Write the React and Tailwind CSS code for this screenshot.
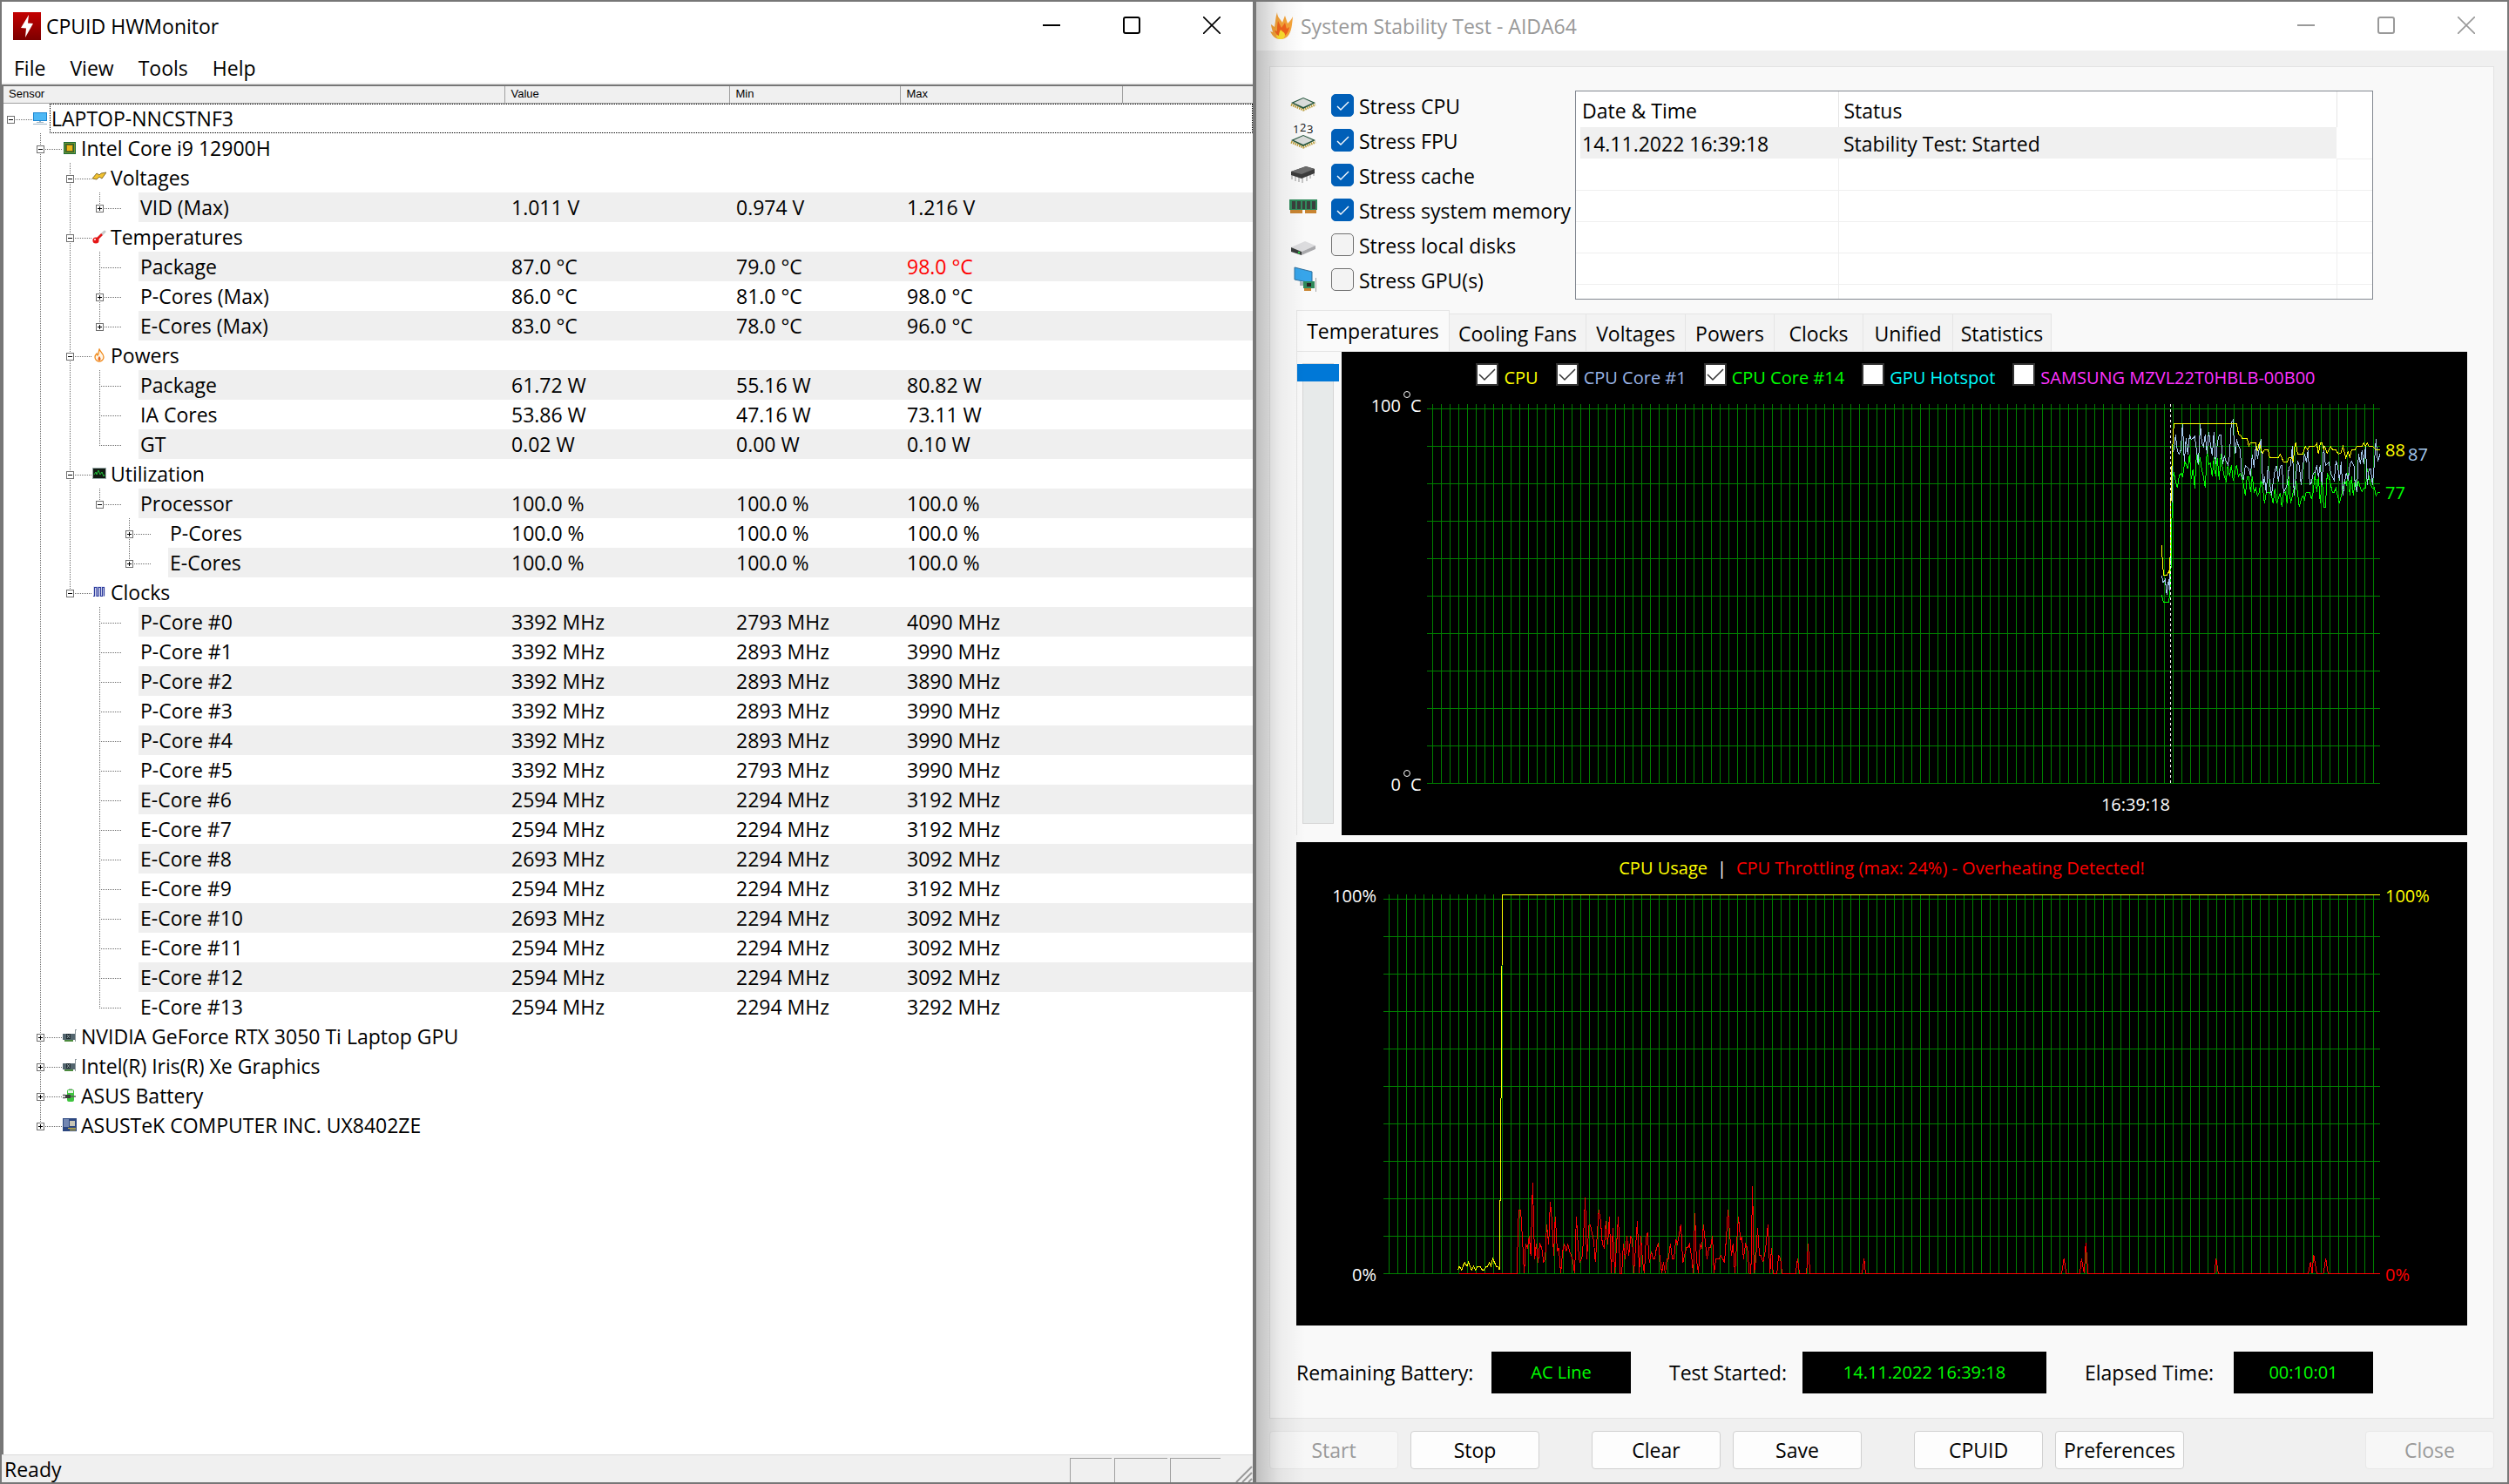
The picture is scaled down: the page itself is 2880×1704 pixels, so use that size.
import { useState } from "react";

const SENSORS = {
  label: "LAPTOP-NNCSTNF3",
  icon: "computer",
  open: true,
  children: [
    {
      label: "Intel Core i9 12900H",
      icon: "chip",
      open: true,
      children: [
        {
          label: "Voltages",
          icon: "voltage",
          open: true,
          children: [{ label: "VID (Max)", values: ["1.011 V", "0.974 V", "1.216 V"], open: false }],
        },
        {
          label: "Temperatures",
          icon: "thermometer",
          open: true,
          children: [
            { label: "Package", values: ["87.0 °C", "79.0 °C", "98.0 °C"], hot: true },
            { label: "P-Cores (Max)", values: ["86.0 °C", "81.0 °C", "98.0 °C"], open: false },
            { label: "E-Cores (Max)", values: ["83.0 °C", "78.0 °C", "96.0 °C"], open: false },
          ],
        },
        {
          label: "Powers",
          icon: "flame",
          open: true,
          children: [
            { label: "Package", values: ["61.72 W", "55.16 W", "80.82 W"] },
            { label: "IA Cores", values: ["53.86 W", "47.16 W", "73.11 W"] },
            { label: "GT", values: ["0.02 W", "0.00 W", "0.10 W"] },
          ],
        },
        {
          label: "Utilization",
          icon: "utilization",
          open: true,
          children: [
            {
              label: "Processor",
              values: ["100.0 %", "100.0 %", "100.0 %"],
              open: true,
              children: [
                { label: "P-Cores", values: ["100.0 %", "100.0 %", "100.0 %"], open: false },
                { label: "E-Cores", values: ["100.0 %", "100.0 %", "100.0 %"], open: false },
              ],
            },
          ],
        },
        {
          label: "Clocks",
          icon: "clock",
          open: true,
          children: [
            { label: "P-Core #0", values: ["3392 MHz", "2793 MHz", "4090 MHz"] },
            { label: "P-Core #1", values: ["3392 MHz", "2893 MHz", "3990 MHz"] },
            { label: "P-Core #2", values: ["3392 MHz", "2893 MHz", "3890 MHz"] },
            { label: "P-Core #3", values: ["3392 MHz", "2893 MHz", "3990 MHz"] },
            { label: "P-Core #4", values: ["3392 MHz", "2893 MHz", "3990 MHz"] },
            { label: "P-Core #5", values: ["3392 MHz", "2793 MHz", "3990 MHz"] },
            { label: "E-Core #6", values: ["2594 MHz", "2294 MHz", "3192 MHz"] },
            { label: "E-Core #7", values: ["2594 MHz", "2294 MHz", "3192 MHz"] },
            { label: "E-Core #8", values: ["2693 MHz", "2294 MHz", "3092 MHz"] },
            { label: "E-Core #9", values: ["2594 MHz", "2294 MHz", "3192 MHz"] },
            { label: "E-Core #10", values: ["2693 MHz", "2294 MHz", "3092 MHz"] },
            { label: "E-Core #11", values: ["2594 MHz", "2294 MHz", "3092 MHz"] },
            { label: "E-Core #12", values: ["2594 MHz", "2294 MHz", "3092 MHz"] },
            { label: "E-Core #13", values: ["2594 MHz", "2294 MHz", "3292 MHz"] },
          ],
        },
      ],
    },
    { label: "NVIDIA GeForce RTX 3050 Ti Laptop GPU", icon: "card", open: false },
    { label: "Intel(R) Iris(R) Xe Graphics", icon: "card", open: false },
    { label: "ASUS Battery", icon: "battery", open: false },
    { label: "ASUSTeK COMPUTER INC. UX8402ZE", icon: "board", open: false },
  ],
};

// Flattens the tree; rails[i] says whether the line of level i goes on below the row.
function flatten(node, depth = 0, rails = [], last = true) {
  const row = { ...node, depth, rails, last };
  const kids = node.children || [];
  return [row].concat(
    ...kids.map((kid, i) => flatten(kid, depth + 1, [...rails, !last], i === kids.length - 1))
  );
}

const ROWS = flatten(SENSORS);

function TreeIcon({ name }) {
  return (
    <svg width="16" height="16" viewBox="0 0 16 16" aria-hidden="true">
      {name === "computer" && (
        <>
          <rect x="0" y="1" width="16" height="10" fill="#1c86d1" />
          <rect x="1" y="2" width="14" height="8" fill="#4db8f5" />
          <path d="M7 11h2v2H7z" fill="#9db4c4" />
          <path d="M4 12.5h8M0 14.5h16" stroke="#9db4c4" />
        </>
      )}
      {name === "chip" && (
        <>
          <rect x="1" y="1" width="14" height="14" fill="#1c6b35" />
          <rect x="2.5" y="2.5" width="11" height="11" fill="none" stroke="#d9c22c" strokeDasharray="1 1" />
          <rect x="4" y="4" width="8" height="8" fill="#7d6512" />
          <rect x="5" y="5" width="6" height="6" fill="#e9b61c" />
        </>
      )}
      {name === "voltage" && (
        <path d="M0 9l5-6 3 2 2-2 6-1-5 7-3-2-3 3z" fill="#f2c230" stroke="#6b5210" strokeWidth="0.8" />
      )}
      {name === "thermometer" && (
        <>
          <path d="M14 2L6 10" stroke="#c9c9c9" strokeWidth="3" strokeLinecap="round" />
          <path d="M11 5l-6 6" stroke="#e51616" strokeWidth="2.5" />
          <circle cx="4" cy="12" r="3.6" fill="#e51616" />
          <circle cx="3" cy="11" r="1" fill="#fff" />
        </>
      )}
      {name === "flame" && (
        <>
          <path d="M8 1c1 3 5 5 5 9a5 5 0 0 1-10 0c0-2 1-3 2-4 0 1 1 2 1 2 2-2 1-5 2-7z" fill="#fff6e6" stroke="#f08a1c" strokeWidth="1.3" />
          <path d="M8 9c2 2 2 5 0 5s-2-3 0-5z" fill="#e8641a" />
        </>
      )}
      {name === "utilization" && (
        <>
          <rect x="0" y="1" width="16" height="13" fill="#99aaaa" />
          <rect x="1" y="2" width="14" height="11" fill="#101a12" />
          <path d="M2 9l2-3 1 3 2-5 2 5 2-3 2 5 1-2" fill="none" stroke="#1fbf3a" />
        </>
      )}
      {name === "clock" && (
        <>
          <rect x="1" y="1" width="13" height="12" fill="#e6e9f8" />
          <path d="M1 12.5h1.500V2.500h2.500v10h2V2.500h2.500v10h2V2.500h2v10" fill="none" stroke="#2b3a9c" strokeWidth="1.2" />
        </>
      )}
      {name === "card" && (
        <>
          <path d="M0 5h14v7H0z" fill="#54666f" />
          <path d="M4 5h5v6H4z" fill="#1e2a2f" />
          <path d="M5 6l3 4M8 6l-3 4" stroke="#aebcc2" strokeWidth="0.8" />
          <path d="M2 12h10v2H2z" fill="#4c8a3e" />
          <path d="M14.5 1v13M14 0.5h2" stroke="#8c979c" />
        </>
      )}
      {name === "battery" && (
        <>
          <rect x="7" y="0" width="4" height="2" fill="#b8b8b8" />
          <rect x="5" y="1" width="8" height="14" rx="2" fill="#3ec43e" />
          <rect x="6" y="2" width="6" height="3" fill="#e6efe6" />
          <path d="M0 7.500h3M0 10.500h3M9 9h6" stroke="#5a5a5a" strokeWidth="1.5" />
          <path d="M3 7h6v4H3z" fill="#3a3a3a" />
        </>
      )}
      {name === "board" && (
        <>
          <rect width="16" height="15" fill="#2c4780" />
          <path d="M2 1v9M4 1v9M6 1v9" stroke="#b9c8e4" />
          <rect x="8" y="3" width="6" height="6" fill="#c9c6b6" />
          <path d="M6 11.500h9M8 13.500h7" stroke="#d9bd39" />
        </>
      )}
    </svg>
  );
}

function Rail({ top, bottom, branch, toggle }) {
  return (
    <svg width="34" height="34" viewBox="0 0 34 34" className="shrink-0" aria-hidden="true" shapeRendering="crispEdges">
      <g stroke="#6e6e6e" strokeDasharray="1 1" fill="none">
        {top && <path d="M8.5 0V18" />}
        {bottom && <path d="M8.5 18V34" />}
        {branch && <path d="M8 18.5H33" />}
      </g>
      {toggle !== undefined && (
        <>
          <rect x="4.5" y="14.5" width="8" height="8" fill="#fff" stroke="#707070" />
          <path d={toggle ? "M6 18.5h5" : "M6 18.5h5M8.5 16v5"} stroke="#000" />
        </>
      )}
    </svg>
  );
}

function SensorRow({ row, index }) {
  const shaded = row.values && index % 2 === 1 ? "bg-[#efefef]" : "";
  const root = row.depth === 0;
  return (
    <tr>
      <td className="p-0" colSpan={root ? 5 : 1}>
        <div className="flex h-[34px]">
          {row.rails.map((on, i) => (
            <Rail key={i} top={on} bottom={on} />
          ))}
          <Rail top={!root} bottom={!row.last} branch toggle={row.open} />
          <span className="flex w-[19px] shrink-0 items-center">
            {row.icon && <TreeIcon name={row.icon} />}
          </span>
          <span
            className={`flex-1 leading-8 whitespace-nowrap ${shaded} ${
              root ? "pl-px border border-dotted border-black" : "pt-px pl-0.5"
            }`}
          >
            {row.label}
          </span>
        </div>
      </td>
      {!root &&
        [0, 1, 2].map((i) => (
          <td
            key={i}
            className={`p-0 pl-2 leading-8 ${shaded} ${row.hot && i === 2 ? "text-[#ff0000]" : ""}`}
          >
            {row.values ? row.values[i] : ""}
          </td>
        ))}
      {!root && <td className={shaded}></td>}
    </tr>
  );
}

function WindowButtons({ tone }) {
  return (
    <div className={`flex h-full ml-auto pb-0.5 pr-px ${tone}`}>
      <button aria-label="Minimize" className="w-[92px] flex items-center justify-center">
        <svg width="20" height="20" viewBox="0 0 20 20" fill="none" stroke="currentColor" strokeWidth="2">
          <path d="M0 10h20" />
        </svg>
      </button>
      <button aria-label="Maximize" className="w-[92px] flex items-center justify-center">
        <svg width="20" height="20" viewBox="0 0 20 20" fill="none" stroke="currentColor" strokeWidth="2">
          <rect x="1" y="1" width="18" height="18" rx="2" />
        </svg>
      </button>
      <button aria-label="Close window" className="w-[92px] flex items-center justify-center">
        <svg width="20" height="20" viewBox="0 0 20 20" fill="none" stroke="currentColor" strokeWidth="1.6">
          <path d="M0 0l20 20M20 0L0 20" />
        </svg>
      </button>
    </div>
  );
}

const STATUS_BOX = "mt-[3px] border-l border-t border-[#a0a0a0]";

function HardwareMonitor() {
  return (
    <section className="w-1/2 flex flex-col border-2 border-[#777777] bg-white">
      <header className="flex items-center h-[56px] pl-[13px]">
        <svg width="32" height="32" viewBox="0 0 32 32" aria-hidden="true">
          <defs>
            <linearGradient id="brand" x1="0" y1="0" x2="0" y2="1">
              <stop offset="0" stopColor="#c40000" />
              <stop offset="1" stopColor="#7c0000" />
            </linearGradient>
          </defs>
          <rect width="32" height="32" fill="url(#brand)" />
          <path d="M18 3L9 18l6 0.500L14 29l9-16-6-0.500z" fill="#fff" />
        </svg>
        <h1 className="ml-1.5">CPUID HWMonitor</h1>
        <WindowButtons tone="text-black" />
      </header>
      <nav className="flex gap-[28px] h-[37px] pl-[14px] leading-10">
        <button>File</button>
        <button>View</button>
        <button>Tools</button>
        <button>Help</button>
      </nav>
      <div className="h-0.5 bg-[#f0f0f0]"></div>
      <div className="flex-1 border-t-2 border-l-2 border-[#767676]">
        <table className="w-full table-fixed border-collapse">
          <colgroup>
            <col className="w-[575px]" />
            <col className="w-[258px]" />
            <col className="w-[196px]" />
            <col className="w-[255px]" />
            <col />
          </colgroup>
          <thead>
            <tr className="h-[19px] bg-[#f0f0f0] text-left text-[13px] leading-4 font-['Liberation_Sans',sans-serif]">
              <th className="p-0 pl-1.5 font-normal border-r border-b border-[#a0a0a0]">Sensor</th>
              <th className="p-0 pl-[7px] font-normal border-r border-b border-[#a0a0a0]">Value</th>
              <th className="p-0 pl-[7px] font-normal border-r border-b border-[#a0a0a0]">Min</th>
              <th className="p-0 pl-[7px] font-normal border-r border-b border-[#a0a0a0]">Max</th>
              <th className="p-0 border-b border-[#a0a0a0]"></th>
            </tr>
          </thead>
          <tbody>
            {ROWS.map((row, i) => (
              <SensorRow key={i} row={row} index={i} />
            ))}
          </tbody>
        </table>
      </div>
      <footer className="flex gap-[3px] h-[32px] border-t border-[#dcdcdc] bg-[#f0f0f0] pl-[3px] leading-8">
        <span className="flex-1">Ready</span>
        <span className={`w-[48px] ${STATUS_BOX}`}></span>
        <span className={`w-[61px] ${STATUS_BOX}`}></span>
        <span className={`w-[58px] ${STATUS_BOX}`}></span>
        <svg width="34" height="30" viewBox="0 0 34 30" aria-hidden="true" className="self-end">
          <path d="M15 30l18-18M22 30l11-11M29 30l4-4" stroke="#9a9a9a" strokeWidth="2" />
        </svg>
      </footer>
    </section>
  );
}

function StressIcon({ name }) {
  return (
    <svg width="32" height="32" viewBox="0 0 32 32" aria-hidden="true" className="shrink-0 overflow-visible">
      {(name === "cpu" || name === "fpu") && (
        <g transform={name === "cpu" ? "translate(0 0)" : "translate(0 3)"}>
          <path d="M2 15l14 6 14-6" fill="none" stroke="#b99a35" strokeWidth="3" strokeDasharray="1.500 1" />
          <path d="M2 13l14-6 14 6-14 7z" fill="#24543c" />
          <path d="M5 13l11-5 11 5-11 5z" fill="#d9dcda" />
        </g>
      )}
      {name === "fpu" && (
        <>
          <text x="4" y="8" fontSize="13" fill="#111">1</text>
          <text x="12" y="6" fontSize="13" fill="#111">2</text>
          <text x="20" y="8" fontSize="13" fill="#111">3</text>
        </>
      )}
      {name === "cache" && (
        <g transform="translate(0 -5)">
          <path d="M3 19v7M7 20v8M11 21v8M15 22v8M20 19v9M24 17v8M28 15v7" stroke="#b5b5b5" strokeWidth="1.500" />
          <path d="M2 17l17-6 10 3v5l-15 6-12-4z" fill="#3b3b3b" />
          <path d="M2 17l17-6 10 3-15 6z" fill="#6c6c6c" />
        </g>
      )}
      {name === "memory" && (
        <>
          <path d="M0 4h32v12H0z" fill="#2f8a5b" />
          <path d="M3 6h4v9H3zM9 6h4v9H9zM15 6h3v9h-3zM20 6h4v9h-4zM26 6h4v9h-4z" fill="#3a3f3c" />
          <path d="M1 16h14v4H1zM18 16h13v4H18z" fill="#c98532" />
        </>
      )}
      {name === "disk" && (
        <>
          <path d="M2 19l16-7 12 5-16 7z" fill="#dcdcde" />
          <path d="M2 19l12 5v4L2 24z" fill="#3a3d3c" />
          <path d="M14 24l16-7v4l-16 7z" fill="#a9a9ac" />
          <circle cx="11" cy="25" r="1.200" fill="#2fd04a" />
        </>
      )}
      {name === "gpu" && (
        <>
          <path d="M6 2l20 5v13L6 16z" fill="#37a5ea" stroke="#2f6e9a" />
          <path d="M12 18l8 2v3h-8z" fill="#a9b4bc" />
          <path d="M16 18h13v8H16z" fill="#2f8a5b" />
          <path d="M20 20h5v4h-5z" fill="#222" />
          <path d="M17 26h8v3h-8z" fill="#c98532" />
          <path d="M30.500 14v16" stroke="#a5a5a5" />
        </>
      )}
    </svg>
  );
}

const STRESS = [
  { name: "cpu", label: "Stress CPU", on: true },
  { name: "fpu", label: "Stress FPU", on: true },
  { name: "cache", label: "Stress cache", on: true },
  { name: "memory", label: "Stress system memory", on: true },
  { name: "disk", label: "Stress local disks", on: false },
  { name: "gpu", label: "Stress GPU(s)", on: false },
];

function StressOption({ item }) {
  const [on, setOn] = useState(item.on);
  return (
    <li className="flex items-center h-10">
      <StressIcon name={item.name} />
      <label className="flex items-center ml-4 whitespace-nowrap">
        <span className="grid mr-1.5">
          <input
            type="checkbox"
            checked={on}
            onChange={() => setOn(!on)}
            className="col-start-1 row-start-1 appearance-none size-[26px] rounded-[5px] border border-[#707070] bg-[#f3f3f3] checked:border-[#005fb8] checked:bg-[#005fb8]"
          />
          {on && (
            <svg viewBox="0 0 26 26" className="col-start-1 row-start-1 size-[26px] pointer-events-none" fill="none" stroke="#fff" strokeWidth="1.400">
              <path d="M7 14l4 4 9-9" />
            </svg>
          )}
        </span>
        <span className="pt-0.5">{item.label}</span>
      </label>
    </li>
  );
}

const SERIES = [
  { label: "CPU", color: "text-[#ffff00]", on: true },
  { label: "CPU Core #1", color: "text-[#99b4e6]", on: true },
  { label: "CPU Core #14", color: "text-[#00ff00]", on: true },
  { label: "GPU Hotspot", color: "text-[#00ffff]", on: false },
  { label: "SAMSUNG MZVL22T0HBLB-00B00", color: "text-[#ff33ff]", on: false },
];

function SeriesToggle({ item }) {
  const [on, setOn] = useState(item.on);
  return (
    <label className={`flex items-center gap-1.5 whitespace-nowrap ${item.color}`}>
      <span className="grid">
        <input
          type="checkbox"
          checked={on}
          onChange={() => setOn(!on)}
          className="col-start-1 row-start-1 appearance-none size-[26px] border-2 border-[#333333] bg-white"
        />
        {on && (
          <svg viewBox="0 0 26 26" className="col-start-1 row-start-1 size-[26px] pointer-events-none" fill="none" stroke="#333" strokeWidth="1.5">
            <path d="M4 13l6 6L22 7" />
          </svg>
        )}
      </span>
      <span className="pt-2">{item.label}</span>
    </label>
  );
}

const TEMP_CPU =
  "304,678 307,740 311,781 322,781 328,769 332,778 334,670 337,456 342,330 346,259 562,259 569,297 575,299 581,310 598,310 604,337 610,325 628,325 634,355 640,325 646,350 652,362 658,349 670,349 676,376 706,376 712,365 724,391 736,391 742,376 752,378 757,388 762,340 766,325 772,364 790,364 798,338 806,348 812,338 830,338 838,328 844,364 850,326 856,326 862,348 866,338 874,362 880,350 886,338 892,348 904,350 912,364 920,362 928,338 938,376 946,356 952,374 958,349 970,349 976,338 994,338 1000,326 1006,336 1012,326 1018,337 1030,337 1042,349 1056,349";
const TEMP_CORE1 =
  "304,783 309,808 316,796 322,850 328,795 332,835 336,500 340,530 341,360 346,350 352,298 358,355 364,364 370,350 376,259 382,390 388,310 394,365 400,300 406,313 412,310 418,304 424,350 430,400 437,262 442,325 448,338 454,298 460,362 466,287 472,330 478,370 484,287 490,400 496,325 502,298 508,298 514,400 520,370 526,390 532,400 538,370 544,255 550,247 553,325 558,362 562,313 568,335 574,346 580,440 586,450 592,404 604,415 610,440 616,367 622,410 628,337 634,380 640,345 646,313 652,455 655,470 658,442 664,497 670,404 676,460 682,507 688,460 694,420 700,404 706,458 712,407 718,403 724,497 736,470 742,412 748,403 754,337 760,508 766,440 772,390 778,403 784,470 790,408 796,362 802,392 808,350 814,470 820,462 826,430 832,428 838,403 844,443 850,403 856,470 862,337 868,404 880,392 886,430 898,455 904,390 910,403 916,456 922,391 928,508 934,460 940,428 946,455 952,400 958,390 966,405 970,470 976,494 982,363 988,400 994,350 1000,400 1006,337 1012,470 1018,415 1024,415 1030,470 1036,400 1042,312 1048,390 1056,364";
const TEMP_CORE14 =
  "304,849 310,875 328,875 332,850 337,735 341,440 346,431 358,481 364,440 370,430 376,441 384,390 394,415 400,365 406,450 412,416 418,482 424,364 430,403 436,376 442,416 448,442 454,481 460,352 466,400 472,395 478,442 484,376 490,442 496,378 502,454 508,364 514,415 520,442 526,456 532,400 538,441 544,403 550,455 556,430 562,402 568,441 574,430 580,442 586,470 592,508 598,442 604,442 610,494 616,442 622,495 628,482 634,508 640,495 646,455 652,480 658,534 664,497 676,497 682,508 688,534 694,482 700,534 712,497 718,547 724,497 730,494 736,535 742,442 748,534 754,508 766,456 772,495 778,547 784,520 790,508 796,520 802,495 814,495 820,520 826,494 832,430 838,494 844,442 850,534 856,442 862,547 868,547 874,430 880,442 886,470 892,495 898,495 904,482 910,508 916,534 922,510 928,482 934,455 940,470 946,430 952,507 958,442 964,507 970,455 976,482 982,455 988,482 994,494 1000,482 1006,482 1012,415 1018,442 1024,470 1030,482 1036,480 1042,508 1048,495 1056,495";
const CPU_USAGE =
  "165,473 168,462 174,475 182,448 188,462 192,448 200,475 205,462 210,475 214,464 222,464 228,476 232,474 237,464 241,462 246,448 250,462 254,436 264,463 268,463 272,475 272,235 275,235 275,0 279,-819 2536,-819";
const CPU_THROTTLING =
  "168,487 316,487 321,267 326,267 331,380 335,487 339,385 344,398 348,358 352,425 357,174 362,437 366,385 371,450 375,385 380,398 385,448 389,437 393,318 398,387 402,240 407,315 411,425 415,291 420,410 424,398 429,487 434,410 438,385 443,410 447,385 452,412 459,435 465,487 469,291 474,400 478,450 485,425 492,226 496,437 502,318 505,320 514,375 518,448 527,267 532,310 536,385 541,398 545,306 550,387 554,291 559,487 563,330 568,487 572,400 577,291 582,487 586,487 590,385 595,437 599,358 604,425 609,358 613,372 617,487 626,306 631,487 635,358 640,450 644,487 648,372 652,346 657,450 662,410 667,437 671,435 675,400 680,385 689,487 693,448 698,487 702,437 706,437 711,385 716,437 720,437 725,370 729,385 738,318 743,450 752,398 756,398 760,385 765,425 770,487 774,280 778,437 783,487 787,387 792,398 796,318 805,437 810,398 814,398 819,358 823,487 828,437 836,437 841,425 850,448 855,358 859,267 864,358 868,425 872,385 877,487 882,372 886,291 891,372 895,360 899,437 904,385 909,400 914,487 918,487 922,186 926,487 931,437 935,330 940,425 944,425 949,448 955,410 962,318 967,487 971,398 975,487 985,487 989,425 994,437 998,487 1033,487 1038,435 1043,487 1061,487 1065,385 1070,487 1204,487 1209,435 1213,487 1717,487 1723,435 1729,487 1764,487 1768,435 1775,487 1779,382 1785,487 2110,487 2114,435 2120,487 2351,487 2357,446 2361,487 2365,423 2373,487 2390,487 2396,435 2402,487 2536,487";

// Vertical line every 10 units, horizontal line every 43 (one tenth of the range).
function Grid({ left, right, top }) {
  const base = top + 435;
  const lines = [];
  for (let x = left + 6; x < right; x += 10) lines.push(`M${x + 0.5} ${top}V${base}`);
  for (let i = 0; i <= 10; i++) lines.push(`M${left} ${base - i * 43 + 0.5}H${right}`);
  return <path d={lines.join("")} stroke="#008000" fill="none" shapeRendering="crispEdges" />;
}

function Line({ points, color }) {
  return (
    <polyline
      points={points}
      fill="none"
      stroke={color}
      strokeWidth="1"
      vectorEffect="non-scaling-stroke"
      shapeRendering="crispEdges"
    />
  );
}

function TemperatureChart() {
  return (
    <div className="flex-1 bg-black text-xl">
      <div className="flex justify-center gap-5 h-[48px] pr-5 pt-1 leading-7">
        {SERIES.map((item) => (
          <SeriesToggle key={item.label} item={item} />
        ))}
      </div>
      <svg viewBox="0 -4 1292 507" className="block w-full overflow-visible" fontSize="20" fill="#fff">
        <Grid left={98} right={1192} top={8} />
        <svg x="840" y="0" width="500" height="244" viewBox="0 168 1500 732">
          <Line points={TEMP_CORE14} color="#00ff00" />
          <Line points={TEMP_CORE1} color="#a6caf0" />
          <Line points={TEMP_CPU} color="#ffff00" />
        </svg>
        <path d="M951.500 8V443" stroke="#fff" strokeDasharray="3 3" shapeRendering="crispEdges" />
        <text x="68" y="17" textAnchor="end">100</text>
        <circle cx="75" cy="-3" r="3.500" fill="none" stroke="#fff" />
        <circle cx="75" cy="432" r="3.500" fill="none" stroke="#fff" />
        <text x="79" y="17">C</text>
        <text x="68" y="452" textAnchor="end">0</text>
        <text x="79" y="452">C</text>
        <text x="951" y="475" textAnchor="end">16:39:18</text>
        <text x="1198" y="68" fill="#ffff00">88</text>
        <text x="1224" y="73" fill="#a6caf0">87</text>
        <text x="1198" y="117" fill="#00ff00">77</text>
      </svg>
    </div>
  );
}

function UsageChart() {
  return (
    <div className="mt-2 bg-black text-xl">
      <div className="flex justify-center h-[48px] pt-4 leading-7">
        <span className="text-[#ffff00]">CPU Usage</span>
        <span className="mx-[11px] text-white">|</span>
        <span className="text-[#ff0000]">CPU Throttling (max: 24%) - Overheating Detected!</span>
      </div>
      <svg viewBox="0 -8 1344 507" className="block w-full overflow-visible" fontSize="20" fill="#fff">
        <Grid left={100} right={1244} top={4} />
        <svg x="112" y="277" width="700" height="240" viewBox="0 0 1568 720" preserveAspectRatio="none" className="overflow-visible">
          <Line points={CPU_THROTTLING} color="#ff0000" />
          <Line points={CPU_USAGE} color="#ffff00" />
        </svg>
        <text x="92" y="13" textAnchor="end">100%</text>
        <text x="92" y="448" textAnchor="end">0%</text>
        <text x="1250" y="13" fill="#ffff00">100%</text>
        <text x="1250" y="448" fill="#ff0000">0%</text>
      </svg>
    </div>
  );
}

const TABS = [
  { label: "Cooling Fans", width: "w-[157px]" },
  { label: "Voltages", width: "w-[114px]" },
  { label: "Powers", width: "w-[102px]" },
  { label: "Clocks", width: "w-[102px]" },
  { label: "Unified", width: "w-[103px]" },
  { label: "Statistics", width: "w-[113px]" },
];

const BUTTON =
  "w-[148px] h-[44px] rounded border border-[#d0d0d0] bg-[#fdfdfd] disabled:border-[#e8e8e8] disabled:bg-[#f7f7f7] disabled:text-[#9a9a9a]";

function StabilityTest() {
  const [level, setLevel] = useState(0);
  return (
    <section className="relative w-1/2 flex flex-col border-2 border-[#777777] bg-[#f0f0f0]">
      <header className="flex items-center h-[56px] bg-white pl-4 text-[#999999]">
        <svg width="28" height="32" viewBox="0 0 28 32" aria-hidden="true">
          <path d="M8 0c0 6 4 8 6 12 1-3 2-6 3-8 1 3 2 6 3 9 2-2 4-4 6-8-1 9-1 26-14 26C6 31 3 28 0 22l3 1c-1-4-2-7-2-9l4 3C6 12 6 6 8 0z" fill="#f9a63a" />
          <path d="M9 10c2 4 3 6 4 8 1-2 3-4 4-6 1 3 1 5 2 7l3-2c-1 6-4 11-9 11-4 0-7-4-8-7l3 1c0-4 0-8 1-12z" fill="#f4641c" />
          <path d="M12 20c1 2 5 3 5 6s-2 5-5 5-5-2-5-5l3 1c0-3 1-5 2-7z" fill="#ffe02e" />
        </svg>
        <h1 className="ml-[7px]">System Stability Test - AIDA64</h1>
        <WindowButtons tone="text-[#999999]" />
      </header>

      <div className="mx-[15px] mt-[18px] flex-1 border border-[#e3e3e3] bg-[#f9f9f9] pt-6 pr-[30px] pl-[22px] pb-[28px]">
        <div className="flex items-start">
          <ul className="w-[328px] shrink-0">
            {STRESS.map((item) => (
              <StressOption key={item.name} item={item} />
            ))}
          </ul>
          <div className="flex-1 h-[240px] mt-[3px] mr-[108px] overflow-hidden border border-[#828790] bg-white">
            <table className="w-full table-fixed border-collapse">
              <colgroup>
                <col className="w-[5px]" />
                <col className="w-[296px]" />
                <col />
                <col className="w-[41px]" />
              </colgroup>
              <thead>
                <tr className="h-[41px] text-left">
                  <th></th>
                  <th className="p-0 pt-0.5 pl-0.5 font-normal border-r border-[#e5e5e5]">Date &amp; Time</th>
                  <th className="p-0 pt-0.5 pl-1.5 font-normal border-r border-[#e5e5e5]">Status</th>
                  <th></th>
                </tr>
              </thead>
              <tbody>
                <tr className="h-9 leading-8">
                  <td></td>
                  <td className="p-0 pt-0.5 pl-0.5 bg-[#f0f0f0]">14.11.2022 16:39:18</td>
                  <td className="p-0 pt-0.5 pl-1.5 bg-[#f0f0f0]">Stability Test: Started</td>
                  <td className="border-b border-[#efefef]"></td>
                </tr>
                {[0, 1, 2, 3, 4].map((i) => (
                  <tr key={i} className="h-9 border-b border-[#efefef]">
                    <td></td>
                    <td className="border-r border-[#efefef]"></td>
                    <td className="border-r border-[#efefef]"></td>
                    <td></td>
                  </tr>
                ))}
              </tbody>
            </table>
          </div>
        </div>

        <div role="tablist" className="flex items-end h-[48px] ml-2 mt-3 border-b border-[#e5e5e5]">
          <button role="tab" aria-selected="true" className="w-[176px] h-[47px] border border-b-0 border-[#e5e5e5] bg-[#fafafa]">
            Temperatures
          </button>
          {TABS.map((tab) => (
            <button
              key={tab.label}
              role="tab"
              aria-selected="false"
              className={`h-[43px] pt-0.5 border-t border-r border-[#e5e5e5] bg-[#f3f3f3] ${tab.width}`}
            >
              {tab.label}
            </button>
          ))}
        </div>

        <div className="flex ml-2">
          <div className="w-[52px] shrink-0 flex border-l border-[#e5e5e5] pt-[13px] pb-[13px]">
            <input
              type="range"
              aria-label="Scroll series"
              value={level}
              onChange={(e) => setLevel(e.target.value)}
              className="appearance-none w-[48px] bg-transparent [writing-mode:vertical-lr] [&::-webkit-slider-runnable-track]:w-[36px] [&::-webkit-slider-runnable-track]:mx-auto [&::-webkit-slider-runnable-track]:border [&::-webkit-slider-runnable-track]:border-[#d6d6d6] [&::-webkit-slider-runnable-track]:bg-[#e7eaea] [&::-webkit-slider-thumb]:appearance-none [&::-webkit-slider-thumb]:w-[48px] [&::-webkit-slider-thumb]:h-5 [&::-webkit-slider-thumb]:-ml-[7px] [&::-webkit-slider-thumb]:bg-[#0078d7]"
            />
          </div>
          <TemperatureChart />
        </div>
        <div className="ml-2">
          <UsageChart />
          <div className="flex items-center mt-[30px] whitespace-nowrap">
            <span className="w-[224px]">Remaining Battery:</span>
            <output className="w-[160px] h-12 bg-black text-center text-xl leading-[48px] text-[#00ff00]">AC Line</output>
            <span className="w-[153px] ml-11">Test Started:</span>
            <output className="w-[280px] h-12 bg-black text-center text-xl leading-[48px] text-[#00ff00]">14.11.2022 16:39:18</output>
            <span className="w-[171px] ml-11">Elapsed Time:</span>
            <output className="w-[160px] h-12 bg-black text-center text-xl leading-[48px] text-[#00ff00]">00:10:01</output>
          </div>
        </div>
      </div>

      <footer className="flex mx-[15px] mt-[14px] mb-[15px]">
        <button disabled className={BUTTON}>Start</button>
        <button className={`ml-[14px] ${BUTTON}`}>Stop</button>
        <button className={`ml-[60px] ${BUTTON}`}>Clear</button>
        <button className={`ml-[14px] ${BUTTON}`}>Save</button>
        <button className={`ml-[60px] ${BUTTON}`}>CPUID</button>
        <button className={`ml-[14px] ${BUTTON}`}>Preferences</button>
        <button disabled className={`ml-auto ${BUTTON}`}>Close</button>
      </footer>

      {/* shadow that the active window casts over this one */}
      <div className="absolute inset-y-0 left-0 w-14 pointer-events-none bg-linear-to-r from-black/20 via-black/5 to-transparent"></div>
    </section>
  );
}

export default function App() {
  return (
    <main className="min-h-screen flex text-[23px] leading-8 text-black font-['Open_Sans',sans-serif]">
      <HardwareMonitor />
      <StabilityTest />
    </main>
  );
}
